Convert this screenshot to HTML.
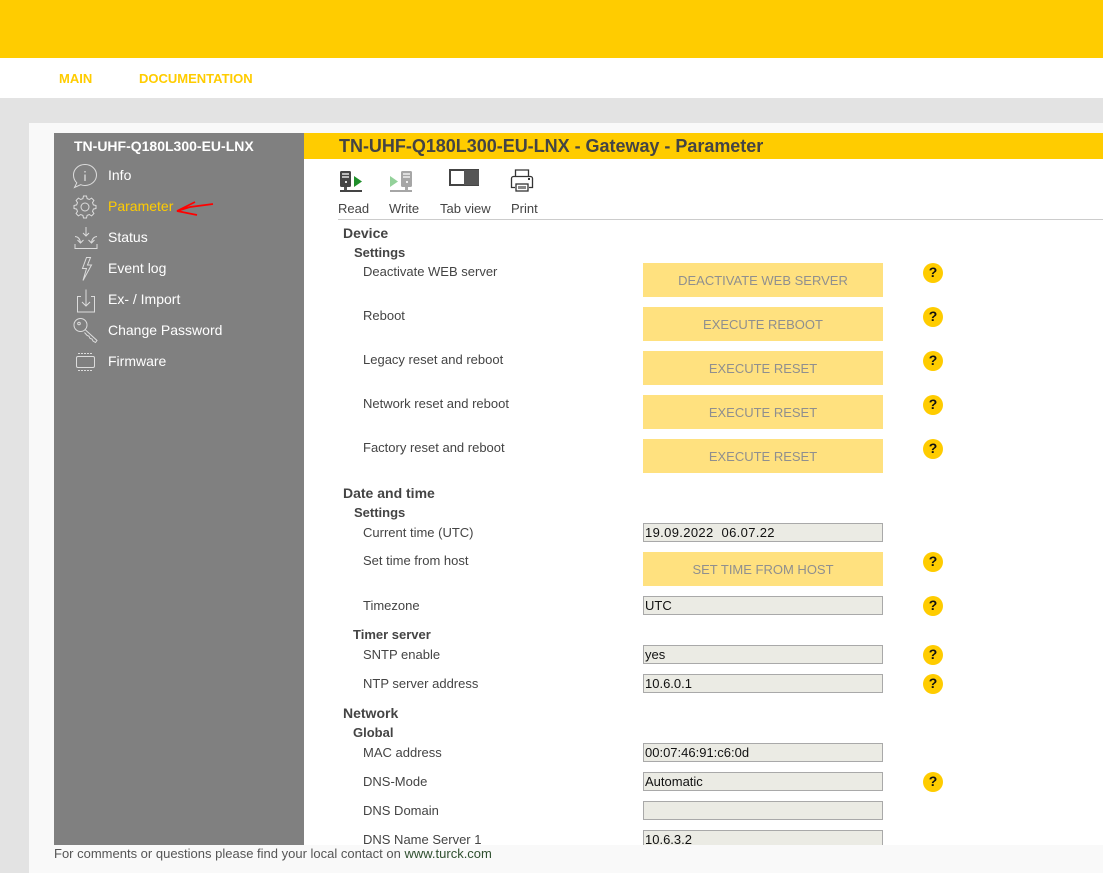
<!DOCTYPE html>
<html>
<head>
<meta charset="utf-8">
<style>
html,body{margin:0;padding:0;}
body{width:1103px;height:873px;position:relative;overflow:hidden;background:#e3e3e3;font-family:"Liberation Sans",sans-serif;font-size:13px;color:#444;}
.a{position:absolute;white-space:nowrap;}
.t{position:absolute;white-space:nowrap;line-height:16px;}
.m{color:#fff;left:108px;font-size:14px;}
.h1{font-weight:bold;left:343px;font-size:14px;}
.h2{font-weight:bold;}
.l{left:363px;}
.b{position:absolute;left:643px;width:240px;height:34px;line-height:35px;background:#ffe17f;color:#8f8f8f;text-align:center;font-size:13px;}
.i{position:absolute;left:643px;box-sizing:border-box;width:240px;height:19px;padding:0 0 0 1px;border:1px solid #a9a9a9;background:#ebebe4;color:#111;line-height:17px;}
.q{position:absolute;left:923px;width:20px;height:20px;border-radius:50%;background:#ffcc00;color:#111;font-weight:bold;text-align:center;line-height:18px;font-size:14px;}
svg{position:absolute;overflow:visible;}
</style>
</head>
<body>
<div class="a" style="left:0;top:0;width:1103px;height:58px;background:#ffcc00"></div>
<div class="a" style="left:0;top:58px;width:1103px;height:40px;background:#fff"></div>
<div class="t" style="left:59px;top:71px;color:#ffcc00;font-weight:bold">MAIN</div>
<div class="t" style="left:139px;top:71px;color:#ffcc00;font-weight:bold">DOCUMENTATION</div>
<div class="a" style="left:29px;top:123px;width:1074px;height:750px;background:#f9f9f9"></div>
<div class="a" style="left:54px;top:133px;width:250px;height:712px;background:#808080"></div>
<div class="a" style="left:304px;top:133px;width:799px;height:712px;background:#fff;overflow:hidden">
</div>
<div class="a" style="left:304px;top:133px;width:799px;height:26px;background:#ffcc00"></div>
<div class="t" style="left:339px;top:136px;font-size:18px;line-height:20px;font-weight:bold;color:#444;letter-spacing:-.02px">TN-UHF-Q180L300-EU-LNX - Gateway - Parameter</div>

<div class="t" style="left:74px;top:138px;color:#fff;font-weight:bold;font-size:14px">TN-UHF-Q180L300-EU-LNX</div>
<div class="t m" style="top:167px">Info</div>
<div class="t m" style="top:198px;color:#ffcc00">Parameter</div>
<div class="t m" style="top:229px">Status</div>
<div class="t m" style="top:260px">Event log</div>
<div class="t m" style="top:291px">Ex- / Import</div>
<div class="t m" style="top:322px">Change Password</div>
<div class="t m" style="top:353px">Firmware</div>

<svg style="left:0;top:0" width="1103" height="873" fill="none" stroke="#dcdcdc" stroke-width="1">
<path d="M85 164.500c6.500 0 11.500 4.700 11.500 10.500S91.500 185.500 85 185.500c-1.500 0-3-.3-4.300-.8L74.500 187.500l2.300-4.700c-2-1.900-3.300-4.700-3.300-7.800C73.500 169.200 78.500 164.500 85 164.500z"/>
<path d="M85 171v1.500M85 174.500v6.500" stroke-width="1.300"/>
<g transform="translate(0,-1)">
<path d="M83.500 197h3l.6 2.600 2.200.9 2.300-1.400 2.300 2.300-1.400 2.300.9 2.200 2.600.6v3l-2.600.6-.9 2.200 1.400 2.300-2.300 2.300-2.300-1.400-2.200.9-.6 2.600h-3l-.6-2.600-2.200-.9-2.300 1.400-2.300-2.300 1.400-2.300-.9-2.200-2.600-.6v-3l2.600-.6.9-2.200-1.400-2.300 2.300-2.300 2.300 1.400 2.200-.9z"/>
<circle cx="85" cy="208" r="4"/>
</g>
<path d="M86 227v9M83 233l3 3 3-3M75 236.500q5 .5 5.500 6.500M77.500 240l3 3 3-3M97 236.500q-5 .5-5.500 6.500M88.500 240l3 3 3-3M75 244v4.500h22V244"/>
<path d="M90.500 257.500h-4l-4 11h4l-3.500 12 8.500-15.500h-4l3-7.500z"/>
<path d="M81 296.500h-3.500v15.500h17v-15.500H91M86 289.500v16M82 302l4 4 4-4"/>
<circle cx="80.500" cy="325" r="6.500"/>
<circle cx="79" cy="323.500" r="1.300"/>
<path d="M85.500 330l11.500 10.500-1.500 2-2.500-1.500-1-2-2-.7-1-2-2-1-2.500-2.800"/>
<rect x="76.500" y="356.500" width="18" height="11" rx="1.500"/>
<path d="M78 353.500h15M78 370.500h15" stroke-dasharray="2 1"/>
<path d="M213 204L190 207L177 211L197 215M177 211L195 202" stroke="#f00" stroke-width="1.800"/>
</svg>

<svg style="left:0;top:0" width="1103" height="873">
<rect x="340" y="171" width="11" height="16" rx="1.500" fill="#444"/>
<rect x="342" y="173" width="7" height="2" fill="#bbb"/><rect x="342" y="176" width="7" height="2" fill="#bbb"/>
<rect x="345" y="181" width="2" height="2" fill="#ddd"/>
<rect x="344" y="187" width="3" height="3" fill="#555"/><rect x="340" y="190" width="22" height="2" fill="#444"/>
<path d="M354 176l8 5.500-8 5.500z" fill="#1f8f2b"/>
<rect x="401" y="171" width="11" height="16" rx="1.500" fill="#a6a6a6"/>
<rect x="403" y="173" width="7" height="2" fill="#ddd"/><rect x="403" y="176" width="7" height="2" fill="#ddd"/>
<rect x="406" y="181" width="2" height="2" fill="#eee"/>
<rect x="405" y="187" width="3" height="3" fill="#aaa"/><rect x="390" y="190" width="22" height="2" fill="#a6a6a6"/>
<path d="M390 176l8 5.500-8 5.500z" fill="#93d19a"/>
<rect x="449" y="169" width="30" height="17" fill="#444"/>
<rect x="464" y="170" width="15" height="15" fill="#555"/>
<rect x="451" y="171" width="13" height="13" fill="#fff"/>
<g fill="none" stroke="#333" stroke-width="1.300">
<path d="M515.500 176v-6h13v6"/>
<path d="M515 187.500h-3.500v-9a2 2 0 0 1 2-2h17a2 2 0 0 1 2 2v9H529"/>
<rect x="516" y="184" width="12" height="7" fill="#fff"/>
</g>
<rect x="518" y="186" width="8" height="3" fill="#888"/>
<rect x="528" y="178" width="2" height="2" fill="#333"/>
</svg>
<div class="t" style="left:338px;top:201px">Read</div>
<div class="t" style="left:389px;top:201px">Write</div>
<div class="t" style="left:440px;top:201px">Tab view</div>
<div class="t" style="left:511px;top:201px">Print</div>
<div class="a" style="left:338px;top:219px;width:765px;height:1px;background:#ccc"></div>

<div class="t h1" style="top:225px">Device</div>
<div class="t h2" style="left:354px;top:245px">Settings</div>
<div class="t l" style="top:264px">Deactivate WEB server</div>
<div class="b" style="top:263px">DEACTIVATE WEB SERVER</div><div class="q" style="top:263px">?</div>
<div class="t l" style="top:308px">Reboot</div>
<div class="b" style="top:307px">EXECUTE REBOOT</div><div class="q" style="top:307px">?</div>
<div class="t l" style="top:352px">Legacy reset and reboot</div>
<div class="b" style="top:351px">EXECUTE RESET</div><div class="q" style="top:351px">?</div>
<div class="t l" style="top:396px">Network reset and reboot</div>
<div class="b" style="top:395px">EXECUTE RESET</div><div class="q" style="top:395px">?</div>
<div class="t l" style="top:440px">Factory reset and reboot</div>
<div class="b" style="top:439px">EXECUTE RESET</div><div class="q" style="top:439px">?</div>

<div class="t h1" style="top:485px">Date and time</div>
<div class="t h2" style="left:354px;top:505px">Settings</div>
<div class="t l" style="top:525px">Current time (UTC)</div>
<div class="i" style="top:523px;letter-spacing:.35px">19.09.2022&nbsp; 06.07.22</div>
<div class="t l" style="top:553px">Set time from host</div>
<div class="b" style="top:552px">SET TIME FROM HOST</div><div class="q" style="top:552px">?</div>
<div class="t l" style="top:598px">Timezone</div>
<div class="i" style="top:596px">UTC</div><div class="q" style="top:596px">?</div>
<div class="t h2" style="left:353px;top:627px">Timer server</div>
<div class="t l" style="top:647px">SNTP enable</div>
<div class="i" style="top:645px">yes</div><div class="q" style="top:645px">?</div>
<div class="t l" style="top:676px">NTP server address</div>
<div class="i" style="top:674px">10.6.0.1</div><div class="q" style="top:674px">?</div>

<div class="t h1" style="top:705px">Network</div>
<div class="t h2" style="left:353px;top:725px">Global</div>
<div class="t l" style="top:745px">MAC address</div>
<div class="i" style="top:743px">00:07:46:91:c6:0d</div>
<div class="t l" style="top:774px">DNS-Mode</div>
<div class="i" style="top:772px">Automatic</div><div class="q" style="top:772px">?</div>
<div class="t l" style="top:803px">DNS Domain</div>
<div class="i" style="top:801px"></div>
<div class="t l" style="top:832px">DNS Name Server 1</div>
<div class="i" style="top:830px">10.6.3.2</div>

<div class="a" style="left:54px;top:845px;width:1049px;height:28px;background:#f9f9f9"></div>
<div class="t" style="left:54px;top:846px;color:#555">For comments or questions please find your local contact on <span style="color:#2f4f2f">www.turck.com</span></div>
</body>
</html>
